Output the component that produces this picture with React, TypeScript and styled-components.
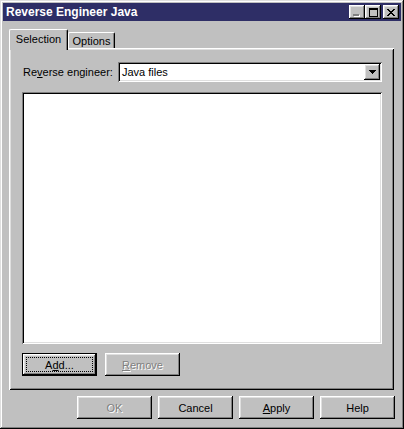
import React from "react";
import styled, { createGlobalStyle, css } from "styled-components";

const FACE = "#c0c0c0";

const Global = createGlobalStyle`
  html, body { margin: 0; padding: 0; background: ${FACE}; }
  body { font-family: "Liberation Sans", Arial, sans-serif; font-size: 11px; color: #000; }
  * { box-sizing: border-box; }
`;

const raised = css`
  box-shadow: inset -1px -1px #000, inset 1px 1px #fff, inset -2px -2px #808080, inset 2px 2px #dfdfdf;
`;

const sunken = css`
  box-shadow: inset 1px 1px #808080, inset -1px -1px #fff, inset 2px 2px #000, inset -2px -2px #dfdfdf;
`;

const Window = styled.div`
  width: 404px;
  height: 429px;
  background: ${FACE};
  padding: 3px;
  display: flex;
  flex-direction: column;
  box-shadow: inset -1px -1px #000, inset 1px 1px #dfdfdf, inset -2px -2px #808080, inset 2px 2px #fff;
`;

const TitleBar = styled.div`
  height: 18px;
  flex-shrink: 0;
  background: #2e2e66;
  display: flex;
  align-items: center;
  padding: 0 2px 0 3px;
`;

const Title = styled.div`
  flex: 1;
  color: #fff;
  font-weight: bold;
  font-size: 12px;
  line-height: 18px;
  white-space: nowrap;
`;

const CaptionButton = styled.div<{ $gap?: number }>`
  width: 16px;
  height: 14px;
  background: ${FACE};
  ${raised};
  display: flex;
  align-items: center;
  justify-content: center;
  margin-left: ${(p) => p.$gap ?? 0}px;
  svg { display: block; }
`;

const Body = styled.div`
  flex: 1;
  display: flex;
  flex-direction: column;
  padding: 8px 7px 0 6px;
`;

const TabStrip = styled.div`
  display: flex;
  align-items: flex-end;
  height: 19px;
  position: relative;
  z-index: 1;
`;

const Tab = styled.div<{ $active?: boolean; $width: number }>`
  width: ${(p) => p.$width}px;
  height: ${(p) => (p.$active ? 21 : 16)}px;
  margin-bottom: ${(p) => (p.$active ? -2 : 0)}px;
  background: ${FACE};
  border-top: 1px solid #fff;
  border-left: 1px solid #fff;
  border-right: 1px solid #000;
  border-radius: 2px 2px 0 0;
  box-shadow: inset -1px 0 #808080;
  text-align: center;
  line-height: 14px;
  padding-top: ${(p) => (p.$active ? 2 : 1)}px;
  white-space: nowrap;
`;

const Panel = styled.div`
  height: 342px;
  flex-shrink: 0;
  background: ${FACE};
  box-shadow: inset 1px 1px #fff, inset -1px -1px #000, inset 2px 2px #dfdfdf, inset -2px -2px #808080;
  padding: 14px 12px 14px 13px;
  display: flex;
  flex-direction: column;
`;

const FieldRow = styled.div`
  display: flex;
  align-items: center;
  height: 20px;
`;

const FieldLabel = styled.div`
  width: 96px;
  padding-left: 1px;
  white-space: nowrap;
`;

const Combo = styled.div`
  flex: 1;
  height: 20px;
  background: #fff;
  ${sunken};
  display: flex;
  align-items: center;
  padding: 2px 2px 2px 4px;
`;

const ComboText = styled.div`
  flex: 1;
  white-space: nowrap;
`;

const DropButton = styled.div`
  width: 16px;
  height: 16px;
  background: ${FACE};
  ${raised};
  display: flex;
  align-items: center;
  justify-content: center;
  svg { display: block; }
`;

const ListBox = styled.div`
  flex: 1;
  margin-top: 10px;
  background: #fff;
  ${sunken};
`;

const ButtonRow = styled.div<{ $gap: number }>`
  display: flex;
  gap: ${(p) => p.$gap}px;
`;

const PanelButtons = styled(ButtonRow)`
  margin-top: 9px;
`;

const Footer = styled(ButtonRow)`
  justify-content: flex-end;
  margin-top: 6px;
  margin-right: -1px;
`;

const Button = styled.div<{ $default?: boolean; $disabled?: boolean }>`
  width: 75px;
  height: 23px;
  background: ${FACE};
  padding: 4px;
  display: flex;
  ${(p) =>
    p.$default
      ? css`
          box-shadow: inset 0 0 0 1px #000, inset -2px -2px #000, inset 2px 2px #fff, inset -3px -3px #808080,
            inset 3px 3px #dfdfdf;
        `
      : raised};
  color: ${(p) => (p.$disabled ? "#808080" : "#000")};
  text-shadow: ${(p) => (p.$disabled ? "1px 1px #fff" : "none")};
`;

const ButtonFace = styled.div<{ $focus?: boolean }>`
  flex: 1;
  display: flex;
  align-items: center;
  justify-content: center;
  border: 1px dotted ${(p) => (p.$focus ? "#000" : "transparent")};
  white-space: nowrap;
  u { text-decoration-thickness: 1px; text-underline-offset: 1px; }
`;

const MinGlyph = () => (
  <svg width="8" height="10" viewBox="0 0 8 10">
    <rect x="1" y="8" width="6" height="2" fill="#fff" />
    <rect x="0" y="7" width="6" height="2" fill="#808080" />
  </svg>
);

const MaxGlyph = () => (
  <svg width="9" height="9" viewBox="0 0 9 9">
    <rect x="0" y="0" width="9" height="2" fill="#000" />
    <rect x="0" y="0" width="1" height="9" fill="#000" />
    <rect x="8" y="0" width="1" height="9" fill="#000" />
    <rect x="0" y="8" width="9" height="1" fill="#000" />
  </svg>
);

const CloseGlyph = () => (
  <svg width="8" height="7" viewBox="0 0 8 7">
    {Array.from({ length: 7 }).map((_, i) => (
      <React.Fragment key={i}>
        <rect x={i} y={i} width="2" height="1" fill="#000" />
        <rect x={6 - i} y={i} width="2" height="1" fill="#000" />
      </React.Fragment>
    ))}
  </svg>
);

const ArrowGlyph = () => (
  <svg width="7" height="4" viewBox="0 0 7 4">
    <rect x="0" y="0" width="7" height="1" fill="#000" />
    <rect x="1" y="1" width="5" height="1" fill="#000" />
    <rect x="2" y="2" width="3" height="1" fill="#000" />
    <rect x="3" y="3" width="1" height="1" fill="#000" />
  </svg>
);

export default function App() {
  return (
    <>
      <Global />
      <Window>
        <TitleBar>
          <Title>Reverse Engineer Java</Title>
          <CaptionButton>
            <MinGlyph />
          </CaptionButton>
          <CaptionButton>
            <MaxGlyph />
          </CaptionButton>
          <CaptionButton $gap={2}>
            <CloseGlyph />
          </CaptionButton>
        </TitleBar>
        <Body>
          <TabStrip>
            <Tab $active $width={59}>Selection</Tab>
            <Tab $width={47}>Options</Tab>
          </TabStrip>
          <Panel>
            <FieldRow>
              <FieldLabel>
                Re<u>v</u>erse engineer:
              </FieldLabel>
              <Combo>
                <ComboText>Java files</ComboText>
                <DropButton>
                  <ArrowGlyph />
                </DropButton>
              </Combo>
            </FieldRow>
            <ListBox />
            <PanelButtons $gap={8}>
              <Button $default>
                <ButtonFace $focus>
                  A<u>d</u>d...
                </ButtonFace>
              </Button>
              <Button $disabled>
                <ButtonFace>
                  <u>R</u>emove
                </ButtonFace>
              </Button>
            </PanelButtons>
          </Panel>
          <Footer $gap={6}>
            <Button $disabled>
              <ButtonFace>OK</ButtonFace>
            </Button>
            <Button>
              <ButtonFace>Cancel</ButtonFace>
            </Button>
            <Button>
              <ButtonFace>
                <u>A</u>pply
              </ButtonFace>
            </Button>
            <Button>
              <ButtonFace>Help</ButtonFace>
            </Button>
          </Footer>
        </Body>
      </Window>
    </>
  );
}
